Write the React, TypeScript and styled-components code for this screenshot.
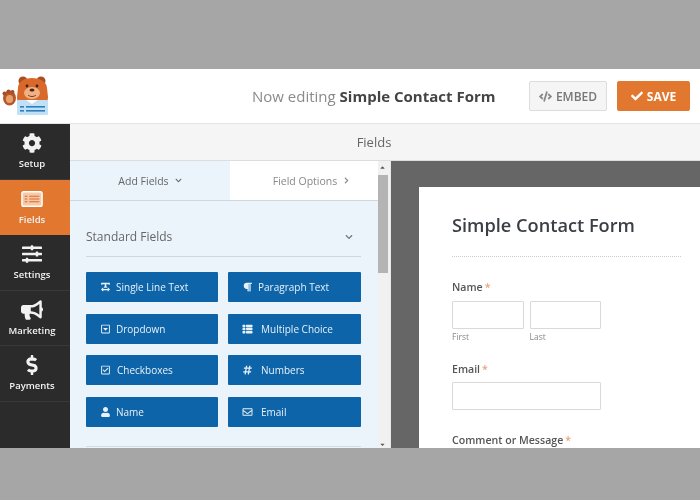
import React from 'react'
import styled, { createGlobalStyle } from 'styled-components'
import {
  FaCog, FaSlidersH, FaBullhorn, FaDollarSign, FaCode, FaCheck,
  FaChevronDown, FaChevronRight, FaTextWidth, FaParagraph, FaRegCaretSquareDown,
  FaThList, FaRegCheckSquare, FaHashtag, FaUser, FaRegEnvelope, FaCaretUp, FaCaretDown,
} from 'react-icons/fa'

const GlobalStyle = createGlobalStyle`
  html, body { margin: 0; padding: 0; background: #a6a6a6; }
  * { box-sizing: border-box; }
  body { font-family: "Open Sans", "Liberation Sans", sans-serif; }
`

const Page = styled.div`
  width: 700px;
  height: 500px;
  padding: 69px 0 52px;
  overflow: hidden;
  background: #a6a6a6;
`
const Builder = styled.div`
  height: 379px;
  display: flex;
  flex-direction: column;
  overflow: hidden;
  background: #fff;
  filter: blur(0.45px);
`
const TopBar = styled.header`
  height: 55px;
  flex: none;
  display: flex;
  align-items: center;
  background: #fff;
  border-bottom: 1px solid #e4e4e4;
`
const Logo = styled.svg`
  width: 50px;
  height: 40px;
  flex: none;
`
const EditingTitle = styled.div`
  margin-left: 202px;
  width: 277px;
  font-size: 15px;
  color: #8a8a8a;
  white-space: nowrap;
  strong { color: #444; font-weight: 700; }
`
const EmbedButton = styled.button`
  width: 78px;
  height: 30px;
  display: flex;
  align-items: center;
  justify-content: center;
  gap: 4px;
  background: #f5f5f5;
  border: 1px solid #ddd;
  border-radius: 2px;
  color: #777;
  font: 600 12px "Open Sans", sans-serif;
  padding: 0;
  svg { width: 13px; height: 13px; color: #888; }
`
const SaveButton = styled(EmbedButton)`
  width: 73px;
  margin-left: 10px;
  background: #e27730;
  border-color: #e27730;
  color: #fff;
  font-weight: 700;
  svg { width: 12px; height: 12px; color: #fff; }
`
const Body = styled.div`
  flex: 1;
  min-height: 0;
  display: flex;
`
const Sidebar = styled.nav`
  width: 70px;
  flex: none;
  background: #2b2b2b;
`
const NavItem = styled.div<{ $active?: boolean }>`
  height: 55.5px;
  display: flex;
  flex-direction: column;
  align-items: center;
  padding: 9px 6px 0 0;
  gap: 4px;
  color: #f2f2f2;
  font-size: 9.5px;
  font-weight: 600;
  background: ${p => (p.$active ? '#e27730' : 'transparent')};
  border-bottom: 1px solid ${p => (p.$active ? '#e27730' : '#383838')};
  svg { width: 22px; height: 20px; flex: none; }
`
const Workspace = styled.div`
  flex: 1;
  min-width: 0;
  display: flex;
  flex-direction: column;
`
const SectionBar = styled.div`
  height: 37px;
  flex: none;
  display: flex;
  align-items: center;
  justify-content: center;
  background: #f5f5f5;
  border-bottom: 1px solid #ddd;
  color: #666;
  font-size: 13px;
  padding-right: 22px;
`
const Split = styled.div`
  flex: 1;
  min-height: 0;
  display: flex;
`
const FieldsPanel = styled.div`
  width: 308px;
  flex: none;
  background: #ebf3fb;
  overflow: hidden;
`
const Tabs = styled.div`
  height: 40px;
  display: flex;
  border-bottom: 1px solid #cfd6dd;
`
const Tab = styled.div<{ $active?: boolean; $width: number }>`
  width: ${p => p.$width}px;
  display: flex;
  align-items: center;
  justify-content: center;
  gap: 6px;
  padding-left: ${p => (p.$active ? 0 : 15)}px;
  font-size: 10.5px;
  color: ${p => (p.$active ? '#666' : '#888')};
  background: ${p => (p.$active ? '#ebf3fb' : '#fff')};
  svg { width: 7px; height: 7px; }
`
const Group = styled.div`
  margin: 0 17px 0 16px;
`
const GroupTitle = styled.div`
  height: 56px;
  display: flex;
  align-items: flex-end;
  justify-content: space-between;
  padding: 0 8px 11px 0;
  border-bottom: 1px solid #ced6de;
  font-size: 12px;
  line-height: 17px;
  color: #666;
  svg { width: 8px; height: 8px; color: #777; margin-bottom: 4px; }
`
const FieldGrid = styled.div`
  display: grid;
  grid-template-columns: 132px 133px;
  column-gap: 10px;
  row-gap: 11.5px;
  padding: 15px 0 19px;
  border-bottom: 1px solid #d5dce3;
`
const FieldButton = styled.div<{ $gap: number }>`
  height: 30px;
  display: flex;
  align-items: center;
  gap: ${p => p.$gap}px;
  padding-left: 14px;
  background: #0e64a8;
  border-radius: 1px;
  color: #e8f1f8;
  font-size: 10px;
  svg { width: 11px; height: 10px; flex: none; }
`
const ScrollTrack = styled.div`
  width: 13px;
  flex: none;
  display: flex;
  flex-direction: column;
  align-items: center;
  padding: 3px 3px 0 0;
  background: #f1f1f1;
  border-right: 1px solid #e8e8e8;
  svg { width: 7px; height: 7px; color: #555; flex: none; }
`
const ScrollThumb = styled.div`
  width: 10px;
  height: 98px;
  margin-top: 4px;
  background: #b4b4b4;
`
const ScrollSpacer = styled.div`
  flex: 1;
`
const Preview = styled.div`
  flex: 1;
  min-width: 0;
  background: #666;
  padding: 26px 0 0 28px;
  overflow: hidden;
`
const FormCard = styled.div`
  height: 400px;
  background: #fff;
  padding: 26px 19px 0 33px;
`
const FormTitle = styled.div`
  height: 44px;
  font-size: 18.2px;
  font-weight: 600;
  color: #3a3f45;
  line-height: 24px;
  border-bottom: 1px dotted #ccc;
`
const FieldLabel = styled.div<{ $top: number }>`
  margin-top: ${p => p.$top}px;
  height: 15px;
  font-size: 10.6px;
  font-weight: 600;
  line-height: 15px;
  color: #555;
  span { color: #e8a27c; margin-left: 2px; }
`
const NameRow = styled.div`
  display: flex;
  gap: 6px;
  margin-top: 6px;
`
const NameColumn = styled.div`
  width: 71.5px;
`
const TextInput = styled.div<{ $width?: number }>`
  width: ${p => (p.$width ? `${p.$width}px` : '100%')};
  height: 28px;
  background: #fff;
  border: 1px solid #d9d9d9;
  border-radius: 1px;
`
const EmailInput = styled(TextInput)`
  margin-top: 5px;
`
const Sublabel = styled.div`
  margin-top: 2px;
  font-size: 8.5px;
  line-height: 11px;
  color: #888;
`

// the form icon of the Fields entry, a filled sheet with rows
const FormsIcon = () => (
  <svg viewBox="0 0 24 18">
    <rect x="1" y="1" width="22" height="16" rx="2" fill="#f6c9a8" stroke="#fff" strokeWidth="1.6" />
    <path d="M4 6h3M9 6h11M4 9h3M9 9h11M4 12h3M9 12h11" stroke="#d9692a" strokeWidth="1.2" />
  </svg>
)

const navItems = [
  { label: 'Setup', icon: <FaCog /> },
  { label: 'Fields', icon: <FormsIcon />, active: true },
  { label: 'Settings', icon: <FaSlidersH /> },
  { label: 'Marketing', icon: <FaBullhorn /> },
  { label: 'Payments', icon: <FaDollarSign /> },
]

const fields = [
  { label: 'Single Line Text', icon: <FaTextWidth />, gap: 5 },
  { label: 'Paragraph Text', icon: <FaParagraph />, gap: 5 },
  { label: 'Dropdown', icon: <FaRegCaretSquareDown />, gap: 5 },
  { label: 'Multiple Choice', icon: <FaThList />, gap: 8 },
  { label: 'Checkboxes', icon: <FaRegCheckSquare />, gap: 6 },
  { label: 'Numbers', icon: <FaHashtag />, gap: 8 },
  { label: 'Name', icon: <FaUser />, gap: 5 },
  { label: 'Email', icon: <FaRegEnvelope />, gap: 8 },
]

// bear mascot holding the form sheet
const BearLogo = () => (
  <Logo viewBox="0 0 50 40">
    <ellipse cx="9.500" cy="22" rx="6.500" ry="7.500" fill="#b5592a" />
    <circle cx="4.500" cy="17.500" r="2" fill="#a84e22" />
    <circle cx="8.500" cy="15.500" r="2" fill="#a84e22" />
    <circle cx="12.500" cy="16" r="2" fill="#a84e22" />
    <ellipse cx="9.500" cy="23" rx="3.600" ry="4" fill="#e8a06c" />
    <circle cx="23" cy="5" r="4.500" fill="#a84e22" />
    <circle cx="41" cy="5" r="4.500" fill="#a84e22" />
    <path d="M18 12c0-6 6-10 14-10s15 4 15 10l1 9c0 4-2 6-4 6H21c-3 0-4-3-4-6z" fill="#d9692a" />
    <ellipse cx="32" cy="17" rx="8" ry="6" fill="#f0b184" />
    <circle cx="27" cy="10" r="1.400" fill="#3a2015" />
    <circle cx="37" cy="10" r="1.400" fill="#3a2015" />
    <ellipse cx="32" cy="14" rx="2.500" ry="1.600" fill="#4a2415" />
    <path d="M28 19c2 2 6 2 8 0" stroke="#7a3a1c" strokeWidth="1" fill="none" />
    <rect x="17" y="24" width="31" height="15" rx="1.500" fill="#bfe0f5" />
    <path d="M26 24l6 4 6-4z" fill="#fff" />
    <rect x="20" y="30" width="4" height="1.600" fill="#2b7fc2" />
    <rect x="26" y="30" width="19" height="1.600" fill="#2b7fc2" />
    <rect x="20" y="34" width="4" height="1.600" fill="#2b7fc2" />
    <rect x="26" y="34" width="19" height="1.600" fill="#2b7fc2" />
  </Logo>
)

export default function App() {
  return (
    <Page>
      <GlobalStyle />
      <Builder>
        <TopBar>
          <BearLogo />
          <EditingTitle>Now editing <strong>Simple Contact Form</strong></EditingTitle>
          <EmbedButton><FaCode /> EMBED</EmbedButton>
          <SaveButton><FaCheck /> SAVE</SaveButton>
        </TopBar>
        <Body>
          <Sidebar>
            {navItems.map(item => (
              <NavItem key={item.label} $active={item.active}>
                {item.icon}
                {item.label}
              </NavItem>
            ))}
          </Sidebar>
          <Workspace>
            <SectionBar>Fields</SectionBar>
            <Split>
              <FieldsPanel>
                <Tabs>
                  <Tab $active $width={160}>Add Fields <FaChevronDown /></Tab>
                  <Tab $width={148}>Field Options <FaChevronRight /></Tab>
                </Tabs>
                <Group>
                  <GroupTitle>Standard Fields <FaChevronDown /></GroupTitle>
                  <FieldGrid>
                    {fields.map(field => (
                      <FieldButton key={field.label} $gap={field.gap}>{field.icon}{field.label}</FieldButton>
                    ))}
                  </FieldGrid>
                </Group>
              </FieldsPanel>
              <ScrollTrack>
                <FaCaretUp />
                <ScrollThumb />
                <ScrollSpacer />
                <FaCaretDown />
              </ScrollTrack>
              <Preview>
                <FormCard>
                  <FormTitle>Simple Contact Form</FormTitle>
                  <FieldLabel $top={23}>Name<span>*</span></FieldLabel>
                  <NameRow>
                    <NameColumn>
                      <TextInput />
                      <Sublabel>First</Sublabel>
                    </NameColumn>
                    <NameColumn>
                      <TextInput />
                      <Sublabel>Last</Sublabel>
                    </NameColumn>
                  </NameRow>
                  <FieldLabel $top={20}>Email<span>*</span></FieldLabel>
                  <EmailInput $width={149} />
                  <FieldLabel $top={23}>Comment or Message<span>*</span></FieldLabel>
                </FormCard>
              </Preview>
            </Split>
          </Workspace>
        </Body>
      </Builder>
    </Page>
  )
}
